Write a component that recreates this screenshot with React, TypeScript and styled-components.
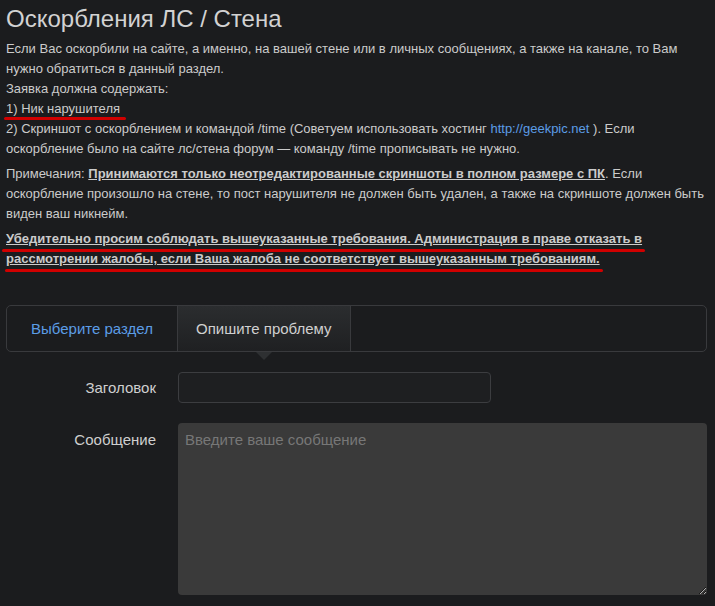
import React from "react";
import styled, { createGlobalStyle } from "styled-components";

const Global = createGlobalStyle`
  html, body { margin: 0; padding: 0; background: #1b1c1e; }
  body { font-family: "Liberation Sans", Arial, sans-serif; color: #cbcbcb; }
  * { box-sizing: border-box; }
`;

const Page = styled.div`
  padding: 3px 8px 0 6px;
`;

const Title = styled.h1`
  margin: 0 0 4px 0;
  font-size: 24px;
  font-weight: normal;
  line-height: 32px;
  color: #d2d2d2;
`;

const Para = styled.p`
  margin: 0 0 5px 0;
  font-size: 13px;
  line-height: 20px;
`;

const Link = styled.a`
  color: #5b9de6;
  text-decoration: none;
`;

const Strong = styled.b`
  text-decoration: underline;
  font-weight: bold;
`;

const Marked = styled.span<{ $thick?: number; $left?: number; $right?: number; $offset?: number }>`
  position: relative;
  &::after {
    content: "";
    position: absolute;
    left: ${(p) => p.$left ?? -2}px;
    right: ${(p) => p.$right ?? -2}px;
    bottom: ${(p) => p.$offset ?? -3}px;
    height: ${(p) => p.$thick ?? 3}px;
    background: #d00000;
    border-radius: 2px;
  }
`;

const Tabs = styled.div`
  margin-top: 36px;
  display: flex;
  height: 47px;
  border: 1px solid #393a3d;
  border-radius: 5px;
  width: 701px;
`;

const Tab = styled.div<{ $active?: boolean }>`
  position: relative;
  min-width: 170px;
  padding: 0 18px;
  display: flex;
  align-items: center;
  justify-content: center;
  font-size: 15px;
  color: ${(p) => (p.$active ? "#d0d0d0" : "#5b9de6")};
  background: ${(p) => (p.$active ? "linear-gradient(#2b2d2f, #1f2022)" : "transparent")};
  border-left: ${(p) => (p.$active ? "1px solid #393a3d" : "none")};
  border-right: ${(p) => (p.$active ? "1px solid #393a3d" : "none")};
  ${(p) =>
    p.$active &&
    `
    &::after {
      content: "";
      position: absolute;
      left: 50%;
      bottom: -9px;
      margin-left: -8px;
      border-left: 8px solid transparent;
      border-right: 8px solid transparent;
      border-top: 8px solid #2e3032;
    }
  `}
`;

const Form = styled.div`
  margin-top: 20px;
  display: flex;
  flex-direction: column;
  gap: 20px;
`;

const Row = styled.div`
  display: grid;
  grid-template-columns: 150px 1fr;
  column-gap: 22px;
  align-items: start;
`;

const Label = styled.label<{ $pad: number }>`
  text-align: right;
  font-size: 15px;
  color: #cfcfcf;
  padding-top: ${(p) => p.$pad}px;
`;

const Input = styled.input`
  width: 313px;
  height: 31px;
  background: #1e1f21;
  border: 1px solid #3c3d40;
  border-radius: 4px;
  color: #ccc;
  outline: none;
`;

const TextArea = styled.textarea`
  width: 529px;
  height: 172px;
  background: #3a3a3a;
  border: none;
  border-radius: 4px;
  padding: 8px 7px;
  font-family: "Liberation Sans", Arial, sans-serif;
  font-size: 15px;
  color: #ccc;
  outline: none;
  &::placeholder { color: #777; }
`;

export default function App() {
  return (
    <>
      <Global />
      <Page>
        <Title>Оскорбления ЛС / Стена</Title>
        <Para>
          Если Вас оскорбили на сайте, а именно, на вашей стене или в личных сообщениях, а также на канале, то Вам
          нужно обратиться в данный раздел.
          <br />
          Заявка должна содержать:
          <br />
          <Marked $thick={3} $left={-2} $right={-6} $offset={-4}>1) Ник нарушителя</Marked>
          <br />
          2) Скриншот с оскорблением и командой /time (Советуем использовать хостинг{" "}
          <Link>http://geekpic.net</Link> ). Если оскорбление было на сайте лс/стена форум — команду /time
          прописывать не нужно.
        </Para>
        <Para>
          Примечания: <Strong>Принимаются только неотредактированные скриншоты в полном размере с ПК</Strong>. Если
          оскорбление произошло на стене, то пост нарушителя не должен быть удален, а также на скриншоте должен быть
          виден ваш никнейм.
        </Para>
        <Para>
          <Marked $left={-4} $right={-3} $offset={-6}>
            <Strong>Убедительно просим соблюдать вышеуказанные требования. Администрация в праве отказать в</Strong>
          </Marked>
          <br />
          <Marked $left={-1} $right={-3} $offset={-6}>
            <Strong>рассмотрении жалобы, если Ваша жалоба не соответствует вышеуказанным требованиям.</Strong>
          </Marked>
        </Para>
        <Tabs>
          <Tab>Выберите раздел</Tab>
          <Tab $active>Опишите проблему</Tab>
        </Tabs>
        <Form>
          <Row>
            <Label $pad={7}>Заголовок</Label>
            <Input />
          </Row>
          <Row>
            <Label $pad={8}>Сообщение</Label>
            <TextArea placeholder="Введите ваше сообщение" />
          </Row>
        </Form>
      </Page>
    </>
  );
}
